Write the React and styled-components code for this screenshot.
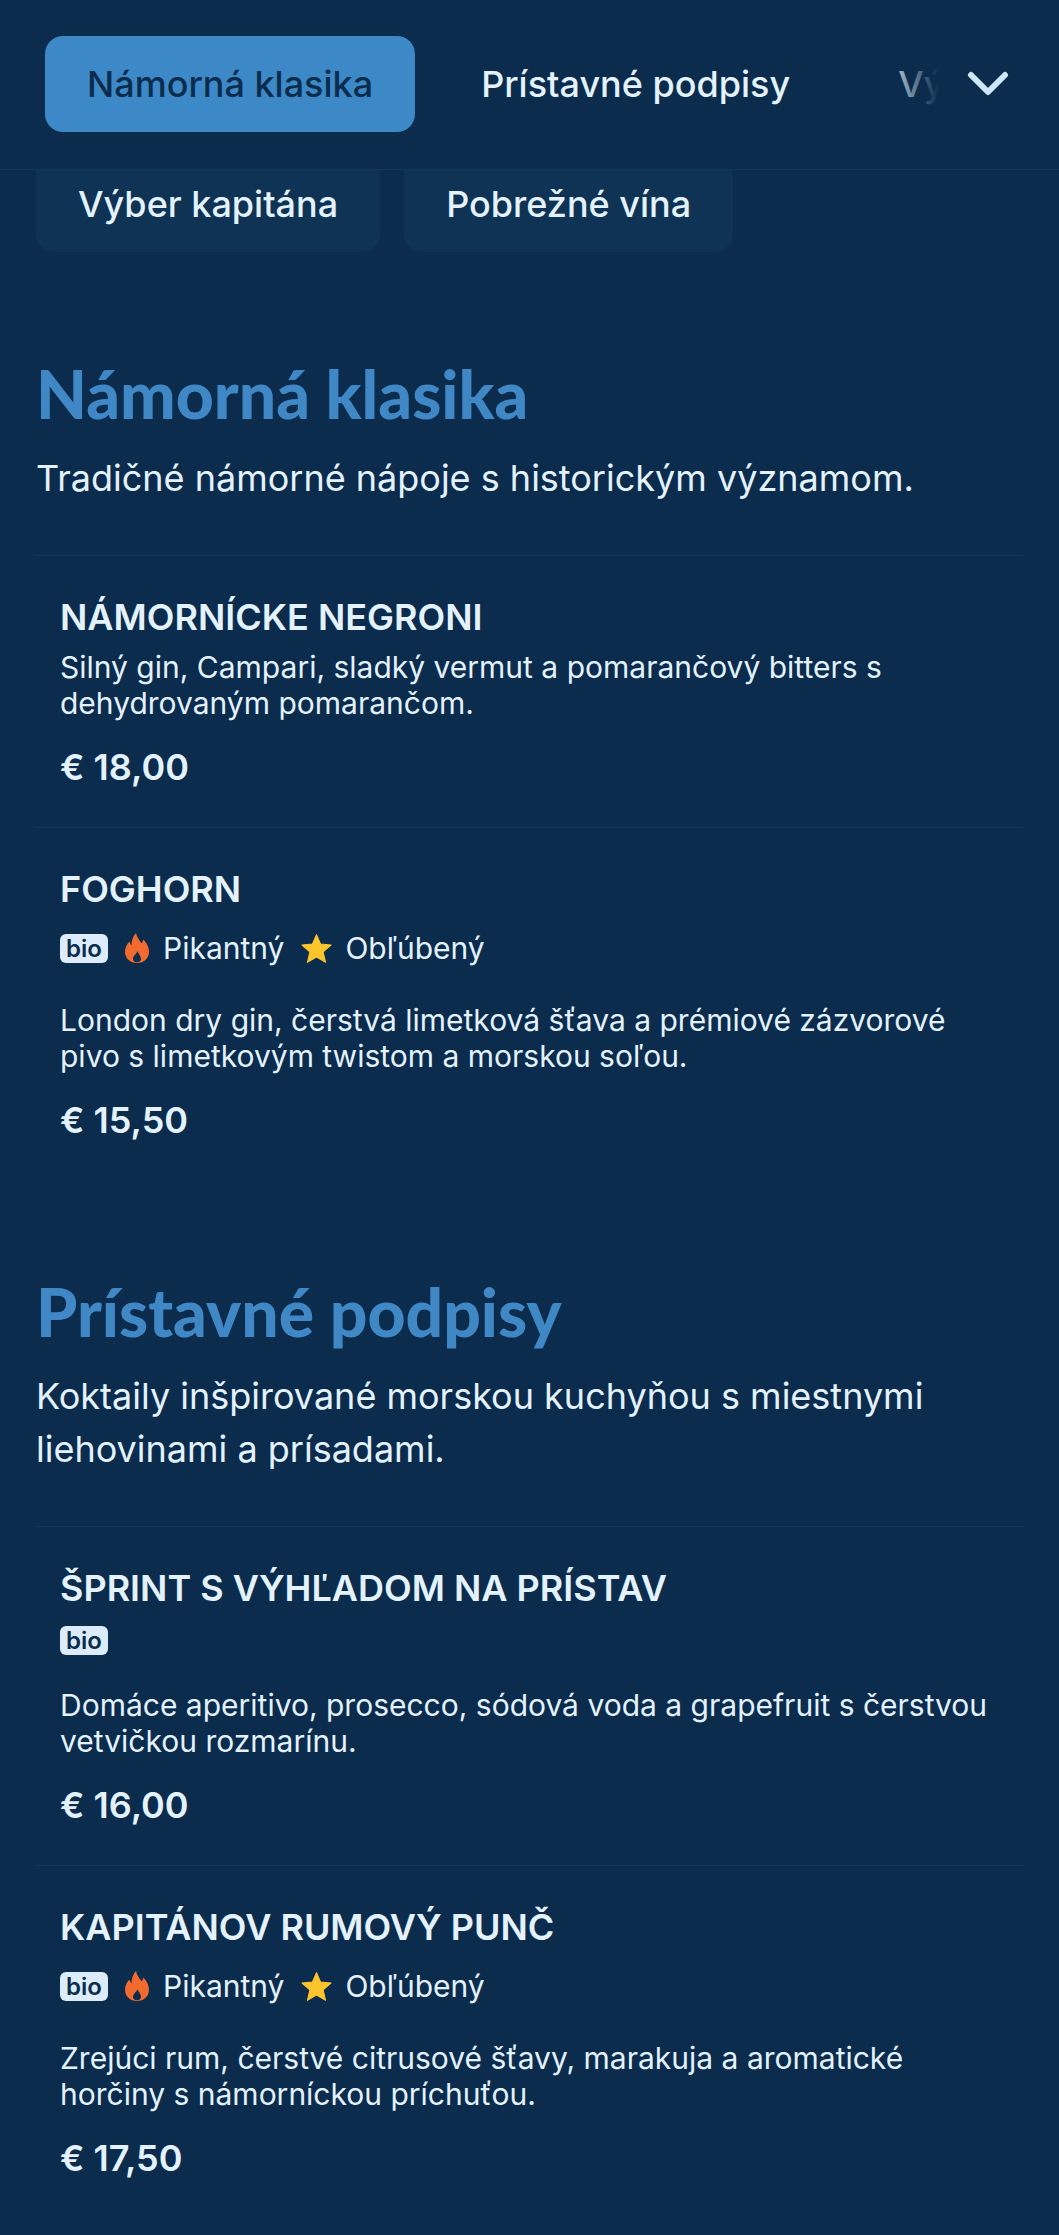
import React from "react";
import styled, { createGlobalStyle } from "styled-components";

const Global = createGlobalStyle`
  html, body { margin: 0; padding: 0; background: #0b2c4d; }
  body { font-family: "Inter", "Liberation Sans", sans-serif; color: #e3f2fd; }
  * { box-sizing: border-box; }
`;
const Page = styled.div`width: 1059px; height: 2235px; overflow: hidden; background: #0b2c4d;`;
const Header = styled.header`
  position: relative; z-index: 2; height: 170px; background: #0b2c4c;
  border-bottom: 1px solid #12365a; display: flex; align-items: flex-start;
  padding: 36px 0 0 45px; overflow: hidden;
`;
const HeadTab = styled.div`
  flex: none; height: 96px; border-radius: 18px; display: flex; align-items: center;
  padding: 0 42px; font-size: 36px; font-weight: 500; margin-right: 24px;
  background: ${p => p.$active ? "#3d88c6" : "transparent"};
  color: ${p => p.$active ? "#0b2c4d" : "#e3f2fd"};
`;
const Fade = styled.div`
  position: absolute; right: 0; top: 0; height: 170px; width: 179px; padding: 0 50px 3px 0;
  display: flex; align-items: center; justify-content: flex-end;
  background: linear-gradient(90deg, rgba(11,44,76,0) 0, #0b2c4c 33%);
`;
const TabRow = styled.nav`display: flex; gap: 24px; padding: 0 36px; margin-top: -14px;`;
const Tab = styled.div`
  height: 96px; padding: 0 42px; display: flex; align-items: center; border-radius: 18px;
  background: #0f3354; font-size: 36px; font-weight: 500; color: #e3f2fd;
`;
const Section = styled.section`padding: 0 36px;`;
const SectionTitle = styled.h2`
  margin: 0; color: #3f88c5; font: 900 66px/76px "Lato", sans-serif;
`;
const SectionDesc = styled.p`margin: 20px 0 0; font-size: 36px; line-height: 53px; color: #e3f2fd;`;
const List = styled.div`margin-top: 50px;`;
const Item = styled.article`padding: 38px 24px 36px; border-top: 1px solid #12365a;`;
const ItemTitle = styled.h3`margin: 0; font-size: 36px; line-height: 46px; font-weight: 600; color: #e3f2fd;`;
const Tags = styled.div`display: flex; align-items: center; height: ${p => p.$hot ? 52 : 38}px; margin-top: 10px; font-size: 30px;`;
const Bio = styled.span`
  background: #dcecfa; color: #0b2c4d; border-radius: 6px; font-size: 24px; font-weight: 600;
  width: 48px; text-align: center; height: 29px; line-height: 29px; margin-right: 17px;
`;
const TagText = styled.span`margin: 0 ${p => p.$after}px 0 ${p => p.$before}px; color: #e3f2fd;`;
const ItemDesc = styled.p`margin: ${p => p.$tagged ? "29px" : "10px"} 0 0; font-size: 30px; line-height: 35.5px; color: #e3f2fd;`;
const Price = styled.div`margin-top: 22px; font-size: 36px; line-height: 48px; font-weight: 600;`;

const Flame = () => (
  <svg width="24" height="30" viewBox="0 0 24 28" preserveAspectRatio="none" aria-hidden="true">
    <path fill="#f26a2e" fillRule="evenodd" d="M11 0C12 4 14 6.500 16.500 9.500 17.500 8.500 18 7.500 18.200 6 21.500 9 24 13 24 17.500 24 23.500 19 28 12 28 5 28 0 23.500 0 17.500 0 13.500 2 10.500 4.500 8 5 9.500 5.500 10.500 6.500 11.500 6.500 7 8 3 11 0ZM12.500 17C11 20 8 21.500 8 24.200 8 26 9.500 27.200 12 27.200 14.500 27.200 16 26 16 24.200 16 21.500 13.800 20 12.500 17Z"/>
  </svg>
);
const Star = () => (
  <svg width="31" height="29" viewBox="0 0 24 23" aria-hidden="true">
    <path fill="#fdc52c" stroke="#fdc52c" strokeWidth="0.800" strokeLinejoin="round" d="M12 .5L15.300 8 23.500 8.800 17.300 14.200 19.200 22.500 12 18.200 4.800 22.500 6.700 14.200.5 8.800 8.700 8Z"/>
  </svg>
);
const Chevron = () => (
  <svg width="42" height="25" viewBox="0 0 42 25" aria-hidden="true">
    <path d="M4 4l17 17L38 4" fill="none" stroke="#cfe5f8" strokeWidth="6" strokeLinecap="round" strokeLinejoin="round"/>
  </svg>
);

const sections = [
  { title: "Námorná klasika", desc: "Tradičné námorné nápoje s historickým významom.", items: [
    { name: "NÁMORNÍCKE NEGRONI", desc: "Silný gin, Campari, sladký vermut a pomarančový bitters s dehydrovaným pomarančom.", price: "€ 18,00" },
    { name: "FOGHORN", bio: true, hot: true, desc: "London dry gin, čerstvá limetková šťava a prémiové zázvorové pivo s limetkovým twistom a morskou soľou.", price: "€ 15,50" },
  ]},
  { title: "Prístavné podpisy", desc: "Koktaily inšpirované morskou kuchyňou s miestnymi liehovinami a prísadami.", items: [
    { name: "ŠPRINT S VÝHĽADOM NA PRÍSTAV", bio: true, desc: "Domáce aperitivo, prosecco, sódová voda a grapefruit s čerstvou vetvičkou rozmarínu.", price: "€ 16,00" },
    { name: "KAPITÁNOV RUMOVÝ PUNČ", bio: true, hot: true, desc: "Zrejúci rum, čerstvé citrusové šťavy, marakuja a aromatické horčiny s námorníckou príchuťou.", price: "€ 17,50" },
  ]},
];

const SectionGap = styled.div`height: ${p => p.$h}px;`;

export default function App() {
  return (
    <Page>
      <Global />
      <Header>
        <HeadTab $active>Námorná klasika</HeadTab>
        <HeadTab>Prístavné podpisy</HeadTab>
        <HeadTab>Výber kapitána</HeadTab>
        <Fade><Chevron /></Fade>
      </Header>
      <TabRow>
        <Tab>Výber kapitána</Tab>
        <Tab>Pobrežné vína</Tab>
      </TabRow>
      <SectionGap $h={104} />
      {sections.map((s, i) => (
        <React.Fragment key={s.title}>
          {i > 0 && <SectionGap $h={94} />}
          <Section>
            <SectionTitle>{s.title}</SectionTitle>
            <SectionDesc>{s.desc}</SectionDesc>
            <List>
              {s.items.map(it => (
                <Item key={it.name}>
                  <ItemTitle>{it.name}</ItemTitle>
                  {it.bio && (
                    <Tags $hot={it.hot}>
                      <Bio>bio</Bio>
                      {it.hot && <><Flame /><TagText $before={14} $after={17}>Pikantný</TagText><Star /><TagText $before={13} $after={0}>Obľúbený</TagText></>}
                    </Tags>
                  )}
                  <ItemDesc $tagged={it.bio}>{it.desc}</ItemDesc>
                  <Price>{it.price}</Price>
                </Item>
              ))}
            </List>
          </Section>
        </React.Fragment>
      ))}
    </Page>
  );
}
